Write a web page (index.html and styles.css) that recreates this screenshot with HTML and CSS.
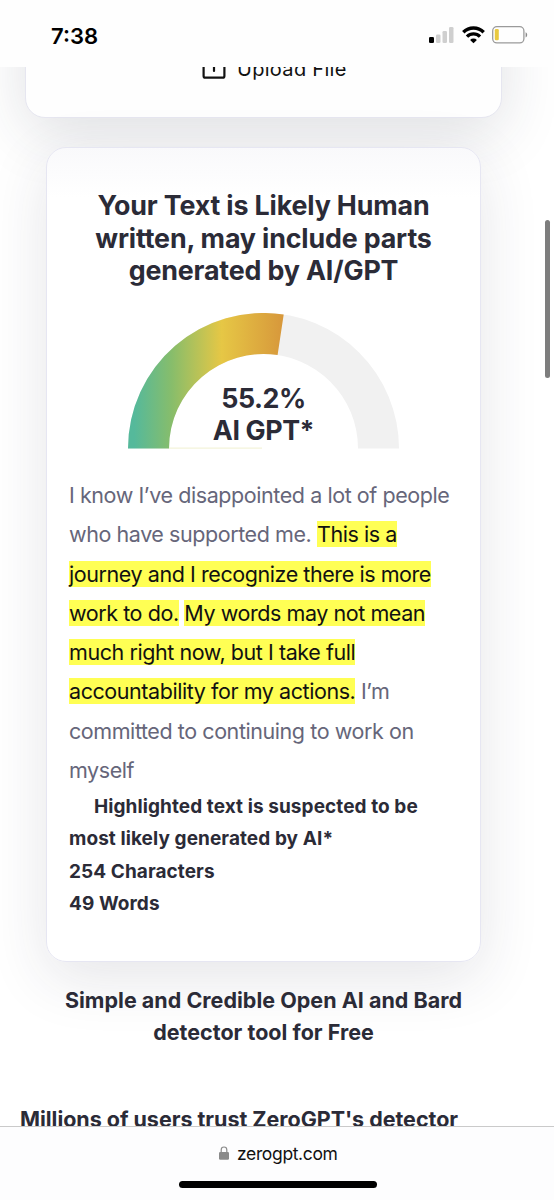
FILE: index.html
```html
<!DOCTYPE html>
<html lang="en">
<head>
    <meta charset="UTF-8">
    <meta name="viewport" content="width=device-width, initial-scale=1.0">
    <title>ZeroGPT</title>
    <link rel="stylesheet" href="styles.css">
</head>
<body>

<header class="status-bar">
    <span class="time">7:38</span>
    <div class="status-icons">
        <svg width="26" height="18" viewBox="0 0 26 18">
            <rect x="1" y="11" width="5" height="6" rx="1.3" fill="#000"/>
            <rect x="8" y="8.5" width="4.5" height="8.5" rx="1.3" fill="#cfcfcf"/>
            <rect x="14.5" y="5" width="4.5" height="12" rx="1.3" fill="#cfcfcf"/>
            <rect x="21" y="1" width="4.5" height="16" rx="1.3" fill="#cfcfcf"/>
        </svg>
        <svg class="wifi" width="23" height="18" viewBox="0 0 23 18" fill="none" stroke="#000" stroke-width="3.4">
            <path d="M1.3 6.2a14.4 14.4 0 0 1 20.4 0"/>
            <path d="M5 10.6a9.2 9.2 0 0 1 13 0"/>
            <path d="M11.5 17.3L8.1 13.9a4.8 4.8 0 0 1 6.8 0z" fill="#000" stroke="none"/>
        </svg>
        <svg class="battery" width="36" height="18" viewBox="0 0 36 18">
            <rect x=".7" y=".7" width="31.2" height="16.2" rx="4.2" fill="none" stroke="#9a9a9a" stroke-width="1.3"/>
            <rect x="2.8" y="3" width="4" height="11.2" rx="1.3" fill="#e9c93f"/>
            <path d="M33.6 6.3c2.1.8 2.1 4.4 0 5.2z" fill="#8a8a8a"/>
        </svg>
    </div>
</header>

<main class="page">
    <section class="upload-card">
        <svg width="24" height="24" viewBox="0 0 24 24" fill="none" stroke="#111" stroke-width="2.2" stroke-linecap="round" stroke-linejoin="round">
            <path d="M1.6 10v8.9a1.8 1.8 0 0 0 1.8 1.8h17.2a1.8 1.8 0 0 0 1.8-1.8V10"/>
            <path d="M12 14V1M7 6l5-5 5 5"/>
        </svg>
        <span class="upload-label">Upload File</span>
    </section>

    <section class="result-card">
        <h2 class="result-title">Your Text is Likely Human<br>written, may include parts<br>generated by AI/GPT</h2>

        <div class="gauge">
            <svg width="272" height="137" viewBox="0 0 272 137">
                <defs>
                    <linearGradient id="score" gradientUnits="userSpaceOnUse" x1="0" y1="0" x2="156" y2="0">
                        <stop offset="0.04" stop-color="#55b99b"/>
                        <stop offset="0.28" stop-color="#87bd6b"/>
                        <stop offset="0.6" stop-color="#e6c745"/>
                        <stop offset="1" stop-color="#d7973b"/>
                    </linearGradient>
                </defs>
                <path d="M0 135.5A135.5 135.5 0 0 1 271 135.5H230A94.5 94.5 0 0 0 41 135.5z" fill="#f1f1f1"/>
                <path d="M0 135.5A135.5 135.5 0 0 1 155.7 1.5L149.6 42.1A94.5 94.5 0 0 0 41 135.5z" fill="url(#score)"/>
                <path d="M41 135.1H134" stroke="#eeeec4" stroke-width=".8"/>
            </svg>
            <div class="gauge-text">55.2%<br>AI GPT*</div>
        </div>

        <p class="result-text">I know I’ve disappointed a lot of people<br>who have supported me. <mark>This is a<br>journey and I recognize there is more<br>work to do.</mark> <mark>My words may not mean<br>much right now, but I take full<br>accountability for my actions.</mark> I’m<br>committed to continuing to work on<br>myself</p>

        <div class="result-info">
            <p class="note">Highlighted text is suspected to be<br>most likely generated by AI*</p>
            <p>254 Characters</p>
            <p>49 Words</p>
        </div>
    </section>

    <h3 class="tagline">Simple and Credible Open AI and Bard<br>detector tool for Free</h3>
    <h3 class="trust">Millions of users trust ZeroGPT's detector</h3>
    <div class="scrollbar"></div>
</main>

<footer class="browser-bar">
    <div class="address">
        <svg width="10" height="14" viewBox="0 0 10 14">
            <path d="M2.2 7V3.8a2.8 2.8 0 0 1 5.6 0V7" fill="none" stroke="#8a8a8a" stroke-width="1.2"/>
            <rect x="0" y="6" width="10" height="7.7" rx="1.3" fill="#8a8a8a"/>
        </svg>
        <span>zerogpt.com</span>
    </div>
    <div class="home-indicator"></div>
</footer>

</body>
</html>
```
FILE: styles.css
```css
* {
    box-sizing: border-box;
}

body {
    margin: 0;
    height: 1200px;
    overflow: hidden;
    display: flex;
    flex-direction: column;
    background-color: #fff;
    color: #2b2b37;
    font-family: Inter, "Liberation Sans", sans-serif;
}

h2, h3, p {
    margin: 0;
}

.status-bar {
    height: 67px;
    flex-shrink: 0;
    display: flex;
    justify-content: space-between;
    padding: 22px 26px 0 51px;
    background-color: #fefefe;
}

.time {
    font-size: 22px;
    line-height: 28px;
    font-weight: 600;
    color: #000;
}

.status-icons {
    display: flex;
    padding-top: 4px;
}

.wifi {
    margin-left: 8px;
}

.battery {
    margin-left: 7px;
}

.page {
    position: relative;
    height: 1059px;
    flex-shrink: 0;
    overflow: hidden;
}

.upload-card {
    width: 477px;
    height: 121px;
    margin: -70px 0 0 25px;
    padding: 59px 0 0 176px;
    display: flex;
    gap: 11px;
    border: 1px solid #e6e6f0;
    border-radius: 20px;
    background-color: #fefefe;
    box-shadow: 0 14px 60px rgba(40, 44, 65, 0.15);
}

.upload-label {
    font-size: 20px;
    line-height: 24px;
    letter-spacing: 0.3px;
    color: #111;
}

.result-card {
    width: 435px;
    height: 815px;
    margin: 29px 0 0 46px;
    padding: 41px 22px 0 22px;
    border: 1px solid #e6e6f2;
    border-radius: 20px;
    background: linear-gradient(#f9f9fb, #fff 50px);
    box-shadow: 0 16px 60px rgba(40, 44, 65, 0.12);
}

.result-title {
    font-size: 26.8px;
    line-height: 32.5px;
    font-weight: 700;
    letter-spacing: -0.15px;
    text-align: center;
    white-space: nowrap;
}

.gauge {
    position: relative;
    width: 271px;
    height: 137px;
    margin: 26px auto 0;
}

.gauge-text {
    position: absolute;
    top: 69px;
    left: 0;
    width: 100%;
    font-size: 26.8px;
    line-height: 32.5px;
    font-weight: 700;
    letter-spacing: -0.4px;
    text-align: center;
}

.result-text {
    margin-top: 26.5px;
    font-size: 21.5px;
    line-height: 39.3px;
    letter-spacing: -0.43px;
    color: #66667a;
    white-space: nowrap;
}

.result-text mark {
    background-color: #ffff54;
    color: #111;
}

.result-info {
    margin-top: 0.5px;
    font-size: 19px;
    line-height: 32.4px;
    font-weight: 700;
    letter-spacing: 0.08px;
    white-space: nowrap;
}

.note {
    text-indent: 25px;
}

.tagline {
    width: 527px;
    margin-top: 22px;
    font-size: 21.5px;
    line-height: 32.4px;
    font-weight: 700;
    letter-spacing: 0.02px;
    text-align: center;
}

.trust {
    margin: 54px 0 0 20px;
    font-size: 21.5px;
    line-height: 32.4px;
    font-weight: 700;
    letter-spacing: -0.03px;
    white-space: nowrap;
}

.scrollbar {
    position: absolute;
    top: 153px;
    right: 4px;
    width: 5px;
    height: 158px;
    border-radius: 3px;
    background-color: #7d7d7d;
}

.browser-bar {
    height: 74px;
    flex-shrink: 0;
    border-top: 1px solid #cacaca;
    background-color: #fdfdfe;
}

.address {
    display: flex;
    align-items: center;
    gap: 8px;
    height: 24px;
    margin: 14px 0 0 219px;
    font-size: 17.5px;
    letter-spacing: -0.35px;
    color: #111;
}

.home-indicator {
    width: 198px;
    height: 7px;
    margin: 16px 0 0 179px;
    border-radius: 4px;
    background-color: #000;
}
```
